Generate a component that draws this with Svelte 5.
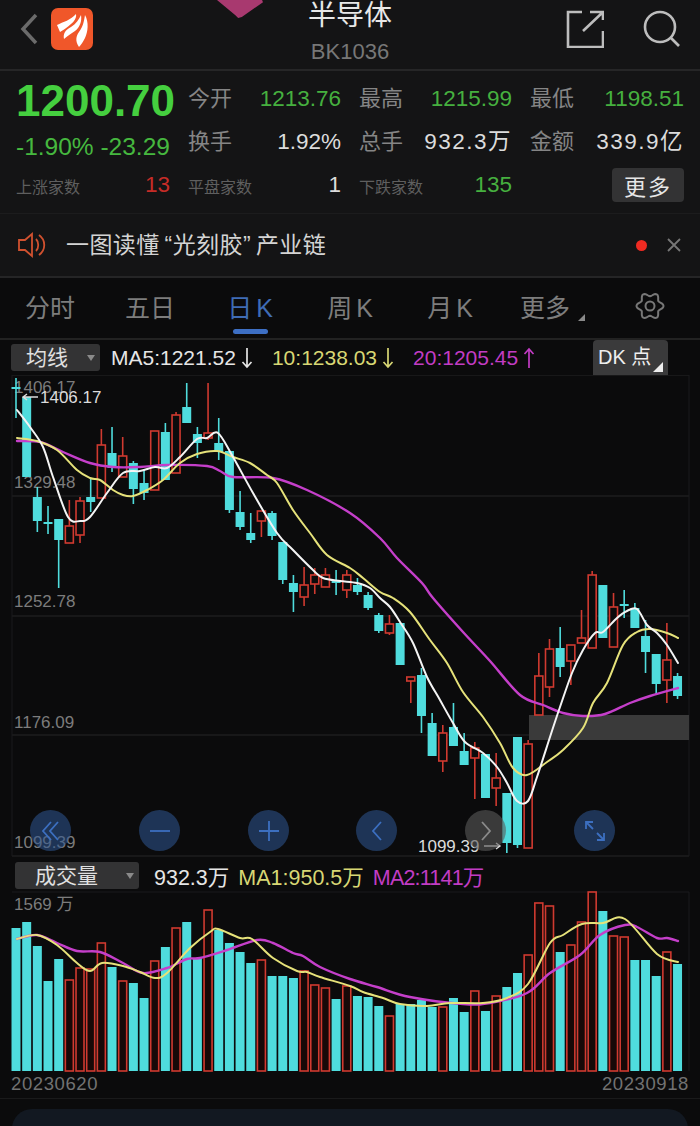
<script>
	// [wickTop, bodyTop, bodyBottom, wickBottom, up]
	const candles = [
		[378,387,389,418,0],[397,397,477,477,0],[487,497,521,532,0],[506,522,524,534,0],[519,519,540,588,0],
		[500,526,543,543,1],[497,501,535,543,1],[478,497,502,512,0],[429,445,498,498,1],[427,453,468,472,0],
		[437,456,477,477,1],[461,463,489,504,0],[470,483,493,500,0],[431,431,490,490,1],[423,432,480,480,0],
		[412,415,473,473,1],[383,407,423,423,0],[427,434,443,458,0],[383,433,438,440,1],[418,443,452,460,0],
		[451,451,510,513,0],[491,512,527,530,0],[513,533,540,543,0],[511,511,521,537,1],[511,513,536,540,0],
		[542,542,580,584,0],[575,583,592,612,0],[567,585,597,606,1],[568,575,584,594,1],[568,575,587,587,1],
		[570,581,583,595,0],[570,575,590,598,1],[578,585,592,595,0],[592,595,608,610,0],[613,615,631,633,0],
		[615,624,633,635,1],[623,623,665,665,0],[677,677,681,703,1],[668,675,716,733,0],[713,723,756,756,0],
		[725,733,761,772,1],[703,727,746,746,0],[733,751,765,765,0],[742,748,758,799,1],[754,754,798,798,0],
		[753,778,788,806,1],[793,793,843,853,0],[737,737,845,848,0],[740,744,848,848,1],[653,676,715,715,1],
		[639,649,687,697,1],[627,648,667,677,0],[645,645,661,685,1],[610,638,643,643,1],[571,575,648,648,1],
		[585,585,638,638,0],[593,607,647,647,1],[590,604,606,618,0],[603,608,628,628,0],[620,636,652,673,0],
		[654,654,684,694,0],[623,660,680,703,1],[673,676,696,699,0]
	];
	// volume bar tops, base is y=1071
	const volumes = [
		928,922,946,981,959,980,968,969,943,967,981,983,998,961,947,928,922,958,910,930,
		943,952,963,960,976,976,978,971,985,988,999,986,996,997,1006,1016,1004,1004,1000,1007,
		1007,998,1012,991,1011,996,987,973,955,903,906,952,945,922,892,911,936,937,960,960,976,952,964
	];
	const volUp = [5,6,7,8,10,13,15,18,23,27,28,29,31,35,40,43,45,48,49,50,52,53,54,56,57,61];
	const barX = (i) => 16 + i * 10.67;

	// catmull-rom through the sampled points, so the averages read as curves
	function smooth(raw) {
		const p = raw.split(' ').map((s) => s.split(',').map(Number));
		let d = `M${p[0][0]} ${p[0][1]}`;
		for (let i = 0; i < p.length - 1; i++) {
			const a = p[Math.max(i - 1, 0)];
			const b = p[i];
			const c = p[i + 1];
			const e = p[Math.min(i + 2, p.length - 1)];
			const c1 = [b[0] + (c[0] - a[0]) / 6, b[1] + (c[1] - a[1]) / 6];
			const c2 = [c[0] - (e[0] - b[0]) / 6, c[1] - (e[1] - b[1]) / 6];
			d += ` C${c1[0].toFixed(1)} ${c1[1].toFixed(1)} ${c2[0].toFixed(1)} ${c2[1].toFixed(1)} ${c[0]} ${c[1]}`;
		}
		return d;
	}

	const ma5 = smooth('17,410 30,427 43,447 53,477 68,517 80,521 90,517 107,493 123,473 140,471 155,467 167,468 180,457 197,439 207,438 218,433 233,457 253,493 277,533 293,550 313,570 323,578 340,581 357,583 370,588 380,598 390,607 400,622 413,643 427,677 440,700 453,723 465,742 483,753 497,767 507,783 517,801 528,801 537,777 550,737 560,707 572,673 583,650 595,633 603,632 617,618 627,611 637,609 647,625 657,633 667,645 678,663');
	const ma10 = smooth('17,438 37,441 57,450 77,470 90,478 100,480 113,490 123,495 133,496 147,490 163,480 180,463 197,454 217,451 233,457 250,463 267,475 277,483 293,510 310,533 327,555 350,568 363,578 380,592 393,598 410,612 430,640 447,663 463,692 483,717 500,743 513,768 527,775 547,762 563,750 583,728 593,703 607,683 623,645 637,632 650,629 667,633 678,638');
	const ma20 = smooth('17,441 40,442 63,452 90,463 113,467 140,467 167,465 207,466 220,471 233,477 273,478 307,490 350,513 380,538 397,558 422,583 433,598 463,632 490,661 520,695 543,705 563,713 583,716 605,714 630,703 650,696 678,688');
	const volMa1 = smooth('17,939 37,935 57,945 77,963 90,971 102,963 123,966 140,972 155,978 167,973 190,948 210,932 218,929 240,938 252,939 273,958 297,971 307,972 320,977 350,986 363,992 383,998 400,1004 427,1006 450,1003 483,1003 507,998 528,984 550,943 563,935 582,924 603,923 625,919 657,954 678,962');
	const volMa2 = smooth('17,939 37,935 57,943 77,951 100,952 123,963 143,973 167,968 187,959 200,958 227,950 257,940 273,943 293,953 303,956 320,967 350,979 377,987 410,997 463,1004 490,1003 527,993 550,973 580,955 600,935 625,925 637,927 657,938 667,938 678,941');

	// six lobes, one pointing right
	let gearPath = '';
	for (let deg = 0; deg < 360; deg += 5) {
		const t = (deg * Math.PI) / 180;
		const r = 11.6 + 1.9 * Math.cos(6 * t);
		gearPath += `${deg ? 'L' : 'M'}${(15 + r * Math.cos(t)).toFixed(2)} ${(15 + r * Math.sin(t)).toFixed(2)} `;
	}
	gearPath += 'Z';

	const tabs = ['分时', '五日', '日 K', '周 K', '月 K'];
	const priceGrid = [375, 496, 616, 735, 856];
	const priceLabels = [['1406.17', 393], ['1329.48', 488], ['1252.78', 607], ['1176.09', 728], ['1099.39', 848]];
</script>

{#snippet arrow(up)}
	<svg class="ma-arrow" width="12" height="22" viewBox="0 0 12 22">
		{#if up}
			<path d="M6 21 V2 M1.5 7 L6 2 L10.5 7" />
		{:else}
			<path d="M6 1 V20 M1.5 15 L6 20 L10.5 15" />
		{/if}
	</svg>
{/snippet}

<div class="page">
	<div class="blob"></div>

	<header class="header">
		<div class="header-left">
			<svg class="back" width="18" height="32" viewBox="0 0 18 32"><path d="M16 2 L3 16 L16 30" /></svg>
			<div class="logo">
				<svg width="42" height="42" viewBox="0 0 42 42">
					<path d="M6 17 C12 14 20 12 25 6 C26 11 22 16 9 24 C8 22 7 19 6 17Z" />
					<path d="M13 31 C12 26 14 22 20 19 C25 16 28 11 30 7 C31 13 29 19 24 23 C20 26 16 28 13 31Z" />
					<path d="M28 39 C24 33 25 28 28 24 C32 19 33 13 34 7 C38 14 37 24 34 30 C32 34 30 37 28 39Z" />
				</svg>
			</div>
		</div>
		<div class="title">
			<div class="name">半导体</div>
			<div class="code">BK1036</div>
		</div>
		<div class="header-right">
			<svg class="line-icon" width="38" height="38" viewBox="0 0 38 38">
				<path d="M16 2 H2 V37 H37 V21 M37 10 V2 H24 M36 3 L17 21" />
			</svg>
			<svg class="line-icon" width="38" height="38" viewBox="0 0 38 38">
				<circle cx="17" cy="17" r="15" /><path d="M28 28 L36 36" />
			</svg>
		</div>
	</header>

	<section class="stats">
		<div class="quote">
			<div class="price">1200.70</div>
			<div class="change">-1.90% -23.29</div>
		</div>
		<div class="pair"><span class="label">今开</span><span class="green">1213.76</span></div>
		<div class="pair"><span class="label">最高</span><span class="green">1215.99</span></div>
		<div class="pair"><span class="label">最低</span><span class="green">1198.51</span></div>
		<div class="pair"><span class="label">换手</span><span class="white">1.92%</span></div>
		<div class="pair"><span class="label">总手</span><span class="white wide">932.3万</span></div>
		<div class="pair"><span class="label">金额</span><span class="white wide">339.9亿</span></div>
		<div class="pair"><span class="label small">上涨家数</span><span class="red">13</span></div>
		<div class="pair"><span class="label small">平盘家数</span><span class="white">1</span></div>
		<div class="pair"><span class="label small">下跌家数</span><span class="green">135</span></div>
		<div class="pair end"><button class="more">更多</button></div>
	</section>

	<section class="notice">
		<svg class="speaker" width="30" height="26" viewBox="0 0 30 26">
			<path d="M1 8 H7 L14 2 V24 L7 18 H1Z" />
			<path d="M18 7 C21 10 21 16 18 19 M21 3 C28 8 28 18 21 23" />
		</svg>
		<span class="notice-text">一图读懂<span class="open">“</span>光刻胶<span class="shut">”</span>产业链</span>
		<span class="dot"></span>
		<svg class="close" width="14" height="14" viewBox="0 0 14 14"><path d="M1 1 L13 13 M13 1 L1 13" /></svg>
	</section>

	<nav class="tabs">
		{#each tabs as tab, i}
			<div class="tab" class:active={i === 2}>{tab}</div>
		{/each}
		<div class="tab tab-more">更多<i class="corner"></i></div>
		<div class="tab">
			<svg class="gear" width="30" height="30" viewBox="0 0 30 30">
				<path d={gearPath} />
				<circle cx="15" cy="15" r="4.5" />
			</svg>
		</div>
	</nav>

	<div class="legend">
		<div class="select price-select">均线<i class="caret"></i></div>
		<span class="ma white-text">MA5:1221.52{@render arrow(false)}</span>
		<span class="ma yellow">10:1238.03{@render arrow(false)}</span>
		<span class="ma magenta">20:1205.45{@render arrow(true)}</span>
		<div class="dk">DK 点<i class="dk-corner"></i></div>
	</div>

	<div class="price-chart">
		<svg width="700" height="485" viewBox="0 375 700 485">
			{#each priceGrid as y}
				<line class="grid" x1="12" x2="689" y1={y} y2={y} />
			{/each}
			<line class="grid-side" x1="12" x2="12" y1="375" y2="856" />
			<line class="grid-side" x1="689" x2="689" y1="375" y2="856" />
			<rect class="band" x="529" y="715" width="160" height="25" />
			{#each priceLabels as [text, y]}
				<text class="axis" x="14" {y}>{text}</text>
			{/each}
			{#each candles as [wt, bt, bb, wb, up], i}
				<line class={up ? 'wick-up' : 'wick-down'} x1={barX(i)} x2={barX(i)} y1={wt} y2={wb} />
				{#if up}
					<rect class="body-up" x={barX(i) - 4} y={bt} width="8" height={bb - bt} />
				{:else}
					<rect class="body-down" x={barX(i) - 4.5} y={bt} width="9" height={bb - bt} />
				{/if}
			{/each}
			<path class="line magenta-line" d={ma20} />
			<path class="line yellow-line" d={ma10} />
			<path class="line white-line" d={ma5} />
			<text class="mark" x="40" y="403">1406.17</text>
			<path class="mark-arrow" d="M38 397 H23 M27 394 L23 397 L27 400" />
			<text class="mark" x="418" y="852">1099.39</text>
			<path class="mark-arrow" d="M484 846 H500 M496 843 L500 846 L496 849" />
		</svg>

		<div class="round one">
			<svg width="22" height="22" viewBox="0 0 22 22"><path d="M11 2 L3 11 L11 20 M18 2 L10 11 L18 20" /></svg>
		</div>
		<div class="round two">
			<svg width="22" height="22" viewBox="0 0 22 22"><path d="M1 11 H21" /></svg>
		</div>
		<div class="round three">
			<svg width="22" height="22" viewBox="0 0 22 22"><path d="M1 11 H21 M11 1 V21" /></svg>
		</div>
		<div class="round four">
			<svg width="22" height="22" viewBox="0 0 22 22"><path d="M15 2 L7 11 L15 20" /></svg>
		</div>
		<div class="round five">
			<svg width="22" height="22" viewBox="0 0 22 22"><path d="M7 2 L15 11 L7 20" /></svg>
		</div>
		<div class="round six">
			<svg width="22" height="22" viewBox="0 0 22 22"><path d="M2 9 V2 H9 M2 2 L9 9 M20 13 V20 H13 M20 20 L13 13" /></svg>
		</div>
	</div>

	<div class="legend vol-legend">
		<div class="select vol-select">成交量<i class="caret"></i></div>
		<span class="ma white-text">932.3万</span>
		<span class="ma yellow">MA1:950.5万</span>
		<span class="ma magenta tight">MA2:1141万</span>
	</div>

	<div class="vol-chart">
		<svg width="700" height="181" viewBox="0 891 700 181">
			<line class="grid-side" x1="12" x2="689" y1="892" y2="892" />
			<line class="grid-side" x1="689" x2="689" y1="892" y2="1071" />
			<text class="axis" x="14" y="910">1569 万</text>
			{#each volumes as top, i}
				{#if volUp.includes(i)}
					<rect class="vol-up" x={barX(i) - 4} y={top} width="8" height={1071 - top} />
				{:else}
					<rect class="body-down" x={barX(i) - 4.5} y={top} width="9" height={1071 - top} />
				{/if}
			{/each}
			<path class="line magenta-line" d={volMa2} />
			<path class="line yellow-line" d={volMa1} />
		</svg>
	</div>

	<div class="dates">
		<span>20230620</span>
		<span>20230918</span>
	</div>

	<div class="bottom-card"></div>
</div>

<style>
	:global(body) {
		margin: 0;
		background: #0b0b0c;
	}

	.page {
		position: relative;
		width: 700px;
		height: 1126px;
		overflow: hidden;
		background: #0b0b0c;
		font-family: "Liberation Sans", "Noto Sans CJK SC", sans-serif;
		color: #ddd;
	}

	.blob {
		position: absolute;
		z-index: 1;
		left: 217px;
		top: 0;
		width: 46px;
		height: 18px;
		background: #a8396f;
		clip-path: polygon(0 0, 40% 85%, 46% 100%, 54% 94%, 100% 12%, 98% 0);
	}

	.header {
		display: grid;
		grid-template-columns: 1fr auto 1fr;
		height: 69px;
		background: #141415;
		border-bottom: 2px solid #262627;
	}

	.header-left {
		display: flex;
		align-items: center;
		gap: 13px;
		padding: 0 0 11px 20px;
	}

	.back path {
		fill: none;
		stroke: #6b6b6b;
		stroke-width: 3.5;
	}

	.logo {
		display: flex;
		width: 42px;
		height: 42px;
		border-radius: 7px;
		background: #f0572a;
	}

	.logo path {
		fill: #fff;
	}

	.title {
		text-align: center;
	}

	.name {
		margin-top: 1px;
		font-size: 28px;
		line-height: 29px;
		color: #e8e8e8;
	}

	.code {
		margin-top: 10px;
		font-size: 22px;
		line-height: 24px;
		color: #777;
	}

	.header-right {
		display: flex;
		justify-content: flex-end;
		align-items: flex-start;
		gap: 39px;
		padding: 10px 19px 0 0;
	}

	.line-icon path,
	.line-icon circle {
		fill: none;
		stroke: #bdbdbd;
		stroke-width: 2.6;
	}

	.stats {
		display: grid;
		grid-template-columns: 154px 153px 153px 154px;
		grid-auto-rows: 43px;
		column-gap: 18px;
		box-sizing: border-box;
		height: 142px;
		padding: 6px 0 0 16px;
		background: #141415;
		font-size: 22.5px;
	}

	.quote {
		grid-row: 1 / span 2;
		white-space: nowrap;
	}

	.price {
		font-size: 44px;
		font-weight: 700;
		line-height: 48px;
		color: #45cf3f;
	}

	.change {
		margin-top: 8px;
		font-size: 24.5px;
		line-height: 28px;
		color: #46b83f;
	}

	.pair {
		display: flex;
		justify-content: space-between;
		align-items: center;
		white-space: nowrap;
	}

	.pair span {
		line-height: 26px;
	}

	.pair.end {
		justify-content: flex-end;
	}

	.label {
		font-size: 22px;
		color: #858585;
	}

	.label.small {
		font-size: 16px;
		color: #5f5f5f;
		padding-top: 6px;
	}

	.green {
		color: #46b03f;
	}

	.white {
		color: #dcdcdc;
	}

	.wide {
		letter-spacing: 1.5px;
	}

	.red {
		color: #c62c27;
	}

	.more {
		width: 72px;
		height: 34px;
		padding: 0;
		border: 0;
		border-radius: 4px;
		background: #333334;
		color: #e6e6e6;
		font: 22px "Liberation Sans", "Noto Sans CJK SC", sans-serif;
		letter-spacing: 2px;
	}

	.notice {
		display: flex;
		align-items: center;
		box-sizing: border-box;
		height: 65px;
		padding: 0 19px 0 18px;
		background: #141415;
		border-top: 1px solid #1c1c1d;
		border-bottom: 2px solid #252526;
	}

	.speaker path {
		fill: none;
		stroke: #d0512f;
		stroke-width: 1.8;
	}

	.notice-text {
		margin-left: 18px;
		font-size: 23px;
		letter-spacing: 0.4px;
		line-height: 26px;
		color: #d4d4d4;
	}

	.open {
		margin-left: 5px;
	}

	.shut {
		margin-right: 5px;
	}

	.dot {
		width: 11px;
		height: 11px;
		margin-left: auto;
		border-radius: 50%;
		background: #ef2b22;
	}

	.close {
		margin-left: 20px;
	}

	.close path {
		stroke: #777;
		stroke-width: 1.8;
	}

	.tabs {
		display: grid;
		grid-template-columns: repeat(7, 100px);
		box-sizing: border-box;
		height: 62px;
		padding-bottom: 4px;
		border-bottom: 2px solid #222;
		font-size: 25px;
		word-spacing: -3px;
	}

	.tab {
		position: relative;
		display: flex;
		justify-content: center;
		align-items: center;
		color: #7d7d7d;
	}

	.tab-more {
		padding-right: 10px;
	}

	.tab.active {
		color: #3f6cb5;
	}

	.tab.active::after {
		content: "";
		position: absolute;
		left: 33px;
		bottom: 0;
		width: 35px;
		height: 5px;
		border-radius: 3px;
		background: #3d6fc4;
	}

	.corner {
		position: absolute;
		right: 15px;
		bottom: 13px;
		border-left: 7px solid transparent;
		border-bottom: 7px solid #8a8a8a;
	}

	.gear path,
	.gear circle {
		fill: none;
		stroke: #777;
		stroke-width: 2;
	}

	.legend {
		display: flex;
		align-items: center;
		height: 35px;
		padding-left: 11px;
		font-size: 21px;
		white-space: nowrap;
	}

	.select {
		position: relative;
		box-sizing: border-box;
		height: 27px;
		border-radius: 3px;
		background: #333334;
		color: #e0e0e0;
		font-size: 21px;
		line-height: 27px;
	}

	.price-select {
		width: 89px;
		padding-left: 15px;
		margin-right: 11px;
	}

	.vol-select {
		width: 124px;
		padding-left: 20px;
		margin-left: 4px;
		margin-right: 15px;
	}

	.caret {
		position: absolute;
		right: 5px;
		top: 11px;
		border-left: 4px solid transparent;
		border-right: 4px solid transparent;
		border-top: 6px solid #8a8a8a;
	}

	.ma {
		display: flex;
		align-items: center;
		margin-right: 19px;
	}

	.ma-arrow {
		margin-left: 5px;
	}

	.ma-arrow path {
		fill: none;
		stroke: currentColor;
		stroke-width: 1.7;
	}

	.vol-legend .ma {
		margin-right: 9px;
		font-size: 21.5px;
	}

	.vol-legend .tight {
		letter-spacing: -0.8px;
	}

	.white-text {
		color: #e6e6e6;
	}

	.yellow {
		color: #d8d774;
	}

	.magenta {
		color: #c23cc4;
	}

	.dk {
		position: relative;
		box-sizing: border-box;
		width: 75px;
		height: 35px;
		margin-left: auto;
		margin-right: 32px;
		padding-left: 5px;
		border-radius: 4px 4px 0 0;
		background: #3a3a3b;
		color: #eee;
		font-size: 20px;
		line-height: 35px;
	}

	.dk-corner {
		position: absolute;
		right: 5px;
		bottom: 3px;
		border-left: 10px solid transparent;
		border-bottom: 10px solid #eee;
	}

	.price-chart {
		position: relative;
		height: 485px;
	}

	.price-chart svg,
	.vol-chart svg {
		display: block;
	}

	.grid {
		stroke: #262627;
		stroke-width: 1;
	}

	.grid-side {
		stroke: #1b1b1c;
		stroke-width: 1;
	}

	.band {
		fill: #3a3a3a;
	}

	.axis {
		fill: #7c7c7c;
		font-size: 17px;
	}

	.mark {
		fill: #dcdcdc;
		font-size: 17px;
	}

	.mark-arrow {
		fill: none;
		stroke: #dcdcdc;
		stroke-width: 1.4;
	}

	.wick-up {
		stroke: #d03a30;
		stroke-width: 1.6;
	}

	.wick-down {
		stroke: #4fdcdd;
		stroke-width: 1.6;
	}

	.body-up {
		fill: #0b0b0c;
		stroke: #d03a30;
		stroke-width: 1.6;
	}

	.body-down {
		fill: #4fdcdd;
	}

	.vol-up {
		fill: #170908;
		stroke: #d03a30;
		stroke-width: 1.6;
	}

	.line {
		fill: none;
		stroke-width: 2;
		stroke-linejoin: round;
		stroke-linecap: round;
	}

	.white-line {
		stroke: #f4f4f4;
	}

	.yellow-line {
		stroke: #e6e27a;
	}

	.magenta-line {
		stroke: #c53fca;
		stroke-width: 2.4;
	}

	.round {
		position: absolute;
		top: 435px;
		display: flex;
		justify-content: center;
		align-items: center;
		width: 41px;
		height: 41px;
		border-radius: 50%;
		background: rgba(48, 88, 148, 0.55);
	}

	.round path {
		fill: none;
		stroke: #3c6fc0;
		stroke-width: 1.8;
	}

	.one { left: 30px; }
	.two { left: 139px; }
	.three { left: 248px; }
	.four { left: 356px; }
	.six { left: 574px; }

	.five {
		left: 465px;
		background: rgba(90, 90, 90, 0.6);
	}

	.five path {
		stroke: #8a8a8a;
	}

	.vol-legend {
		height: 31px;
	}

	.vol-chart {
		height: 181px;
	}

	.dates {
		display: flex;
		justify-content: space-between;
		height: 26px;
		padding: 0 11px;
		font-size: 18.5px;
		letter-spacing: 0.6px;
		line-height: 24px;
		color: #727272;
		border-bottom: 1px solid #1a1a1b;
	}

	.bottom-card {
		height: 20px;
		margin: 10px 12px 0;
		border-radius: 20px 20px 0 0;
		background: #121821;
	}
</style>
